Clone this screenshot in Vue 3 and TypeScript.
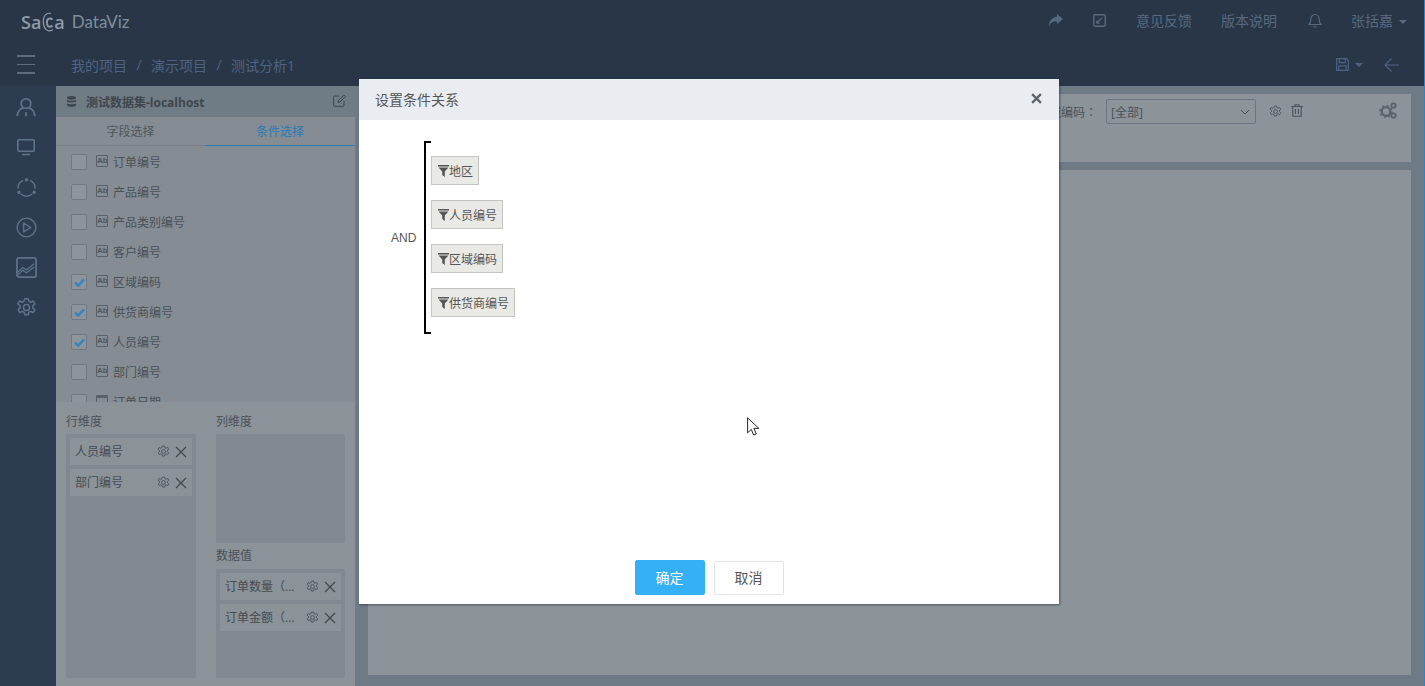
<script setup lang="ts">
// Analysis editor behind the "set condition relation" dialog. Colours are the
// already dimmed values, the page sits under the modal mask.
interface Field { name: string; checked: boolean; kind?: string }

const fields: Field[] = [
  { name: '订单编号', checked: false },
  { name: '产品编号', checked: false },
  { name: '产品类别编号', checked: false },
  { name: '客户编号', checked: false },
  { name: '区域编码', checked: true },
  { name: '供货商编号', checked: true },
  { name: '人员编号', checked: true },
  { name: '部门编号', checked: false },
  { name: '订单日期', checked: false, kind: 'date' },
]
const rows = ['人员编号', '部门编号']
const values = ['订单数量（...', '订单金额（...']
const conditions = ['地区', '人员编号', '区域编码', '供货商编号']
</script>

<template>
  <div class="app">
    <svg class="defs" width="0" height="0" aria-hidden="true">
      <symbol id="gear" viewBox="0 0 24 24">
        <path fill="none" stroke="currentColor" stroke-width="1.700" stroke-linejoin="round" d="M10 2h4l.7 3 2.200 1 2.700-1.500 2 3.400-2.300 2.100v2.400l2.300 2.100-2 3.400-2.700-1.500-2.200 1-.7 3h-4l-.7-3-2.200-1-2.700 1.500-2-3.400 2.300-2.100v-2.400L2.100 7.900l2-3.400L6.800 6 9 5z" />
        <circle cx="12" cy="12" r="3.500" fill="none" stroke="currentColor" stroke-width="1.700" />
      </symbol>
      <symbol id="cross" viewBox="0 0 12 12">
        <path d="M1 1l10 10M11 1L1 11" fill="none" stroke="currentColor" stroke-width="1.200" />
      </symbol>
      <symbol id="funnel" viewBox="0 0 11 12">
        <path d="M0 0h11v1.500H0zM.6 2.400h9.800L6.800 6.600V12L4.200 10V6.600z" fill="currentColor" />
      </symbol>
    </svg>

    <header class="topbar">
      <div class="logo">
        <span class="logo-saca">Sa</span>
        <svg class="logo-mark" viewBox="0 0 14 20" width="14" height="20">
          <path d="M10 1.500C6 .5 3 3 2.500 7c-.5 4 0 8 2.500 10.500 2 1.500 5 1.500 7 0" fill="none" stroke="currentColor" stroke-width="1.200" />
          <path d="M11.500 7.500C10 6 7.500 6 6.500 7.500c-1 2-1 4 0 6 1 1.500 3.500 1.500 5 0" fill="none" stroke="currentColor" stroke-width="2" />
        </svg>
        <span class="logo-saca">a</span>
        <span class="logo-name">DataViz</span>
      </div>
      <nav class="top-actions">
        <svg class="share" viewBox="0 0 16 14" width="15" height="13">
          <path d="M9.500 0L16 5.500 9.500 11V7.800C5.500 7.800 2.800 9 1 13 1 7.500 4 3.500 9.500 3.200z" fill="currentColor" />
        </svg>
        <svg class="task" viewBox="0 0 14 14" width="13" height="13">
          <rect x=".8" y=".8" width="12.400" height="12.400" rx="1.500" fill="none" stroke="currentColor" stroke-width="1.500" />
          <path d="M4 9.800L9.500 4.300M4.200 7v2.800H7" fill="none" stroke="currentColor" stroke-width="1.300" />
        </svg>
        <a class="top-link">意见反馈</a>
        <a class="top-link">版本说明</a>
        <svg class="bell" viewBox="0 0 14 15" width="14" height="15">
          <path d="M1 11.500c1.500-1.500 1.800-2.500 1.800-5C2.800 3.500 4.700 1.500 7 1.500s4.200 2 4.200 5c0 2.500.3 3.500 1.800 5zM5.500 13.300c.5 1 2.500 1 3 0" fill="none" stroke="currentColor" stroke-width="1.100" />
        </svg>
        <a class="top-user"><span>张括嘉</span><i class="caret" /></a>
      </nav>
    </header>

    <div class="crumbbar">
      <div class="burger"><i /><i /><i /></div>
      <div class="crumbs">
        <span>我的项目</span><b>/</b><span>演示项目</span><b>/</b><span>测试分析1</span>
      </div>
      <div class="crumb-tools">
        <svg viewBox="0 0 14 14" width="13" height="13">
          <path d="M.7.7h10.600l2 2v10.600H.7zM3.500 1v4h6.500V1M3 13V8.500h8V13" fill="none" stroke="currentColor" stroke-width="1.200" />
        </svg>
        <i class="caret" />
        <svg class="back" viewBox="0 0 15 14" width="15" height="14">
          <path d="M15 7H1M7.500.5L1 7l6.500 6.500" fill="none" stroke="currentColor" stroke-width="1.100" />
        </svg>
      </div>
    </div>

    <div class="main">
      <aside class="rail">
        <svg viewBox="0 0 24 24" width="22" height="22">
          <circle cx="12" cy="7.500" r="5.500" fill="none" stroke="currentColor" stroke-width="2" />
          <path d="M2 22c0-5.500 3.500-9 7-9.500M22 22c0-5.500-3.500-9-7-9.500M12 17v5" fill="none" stroke="currentColor" stroke-width="2" />
        </svg>
        <svg viewBox="0 0 18 17" width="18" height="17">
          <rect x=".8" y=".8" width="16.400" height="11.400" rx="1" fill="none" stroke="currentColor" stroke-width="1.600" />
          <path d="M5 15.500h8" stroke="currentColor" stroke-width="1.600" />
        </svg>
        <svg viewBox="0 0 22 22" width="21" height="21">
          <path d="M7.500 3.500A9 9 0 0 0 2 12M14.500 3.500A9 9 0 0 1 20 12M5 17.800a9 9 0 0 0 12 0" fill="none" stroke="currentColor" stroke-width="1.500" />
          <circle cx="11" cy="2.800" r="1.800" fill="currentColor" />
          <circle cx="3" cy="16" r="1.800" fill="currentColor" />
          <circle cx="19" cy="16" r="1.800" fill="currentColor" />
        </svg>
        <svg viewBox="0 0 22 22" width="21" height="21">
          <circle cx="11" cy="11" r="9.800" fill="none" stroke="currentColor" stroke-width="1.500" />
          <path d="M8 6.500L15.500 11 8 15.500z" fill="none" stroke="currentColor" stroke-width="1.500" stroke-linejoin="round" />
        </svg>
        <svg viewBox="0 0 22 22" width="21" height="21">
          <rect x="1" y="1" width="20" height="20" rx="2" fill="none" stroke="currentColor" stroke-width="1.800" />
          <path d="M2 16l5-5 4 2.500L19 7M2 19l5-5 4 2.500 8-6" fill="none" stroke="currentColor" stroke-width="1.300" />
        </svg>
        <svg viewBox="0 0 24 24" width="21" height="21"><use href="#gear" /></svg>
      </aside>

      <section class="panel">
        <div class="panel-title">
          <svg viewBox="0 0 12 12" width="11" height="11">
            <ellipse cx="6" cy="2" rx="5" ry="2" fill="currentColor" />
            <path d="M1 4c1.500 1.500 8.500 1.500 10 0v2c-1.500 1.500-8.500 1.500-10 0zM1 8c1.500 1.500 8.500 1.500 10 0v2c-1.500 2.500-8.500 2.500-10 0z" fill="currentColor" />
          </svg>
          <span>测试数据集-localhost</span>
          <svg class="edit" viewBox="0 0 13 13" width="13" height="13">
            <path d="M11 7v4.200c0 .7-.5 1.200-1.200 1.200H1.800c-.7 0-1.200-.5-1.200-1.200V3.200C.6 2.500 1.100 2 1.800 2H6M5 8.500l.5-2L11 1l1.500 1.500L7 8z" fill="none" stroke="currentColor" stroke-width="1" />
          </svg>
        </div>
        <div class="tabs">
          <span>字段选择</span>
          <span class="on">条件选择</span>
        </div>
        <ul class="fields">
          <li v-for="f in fields" :key="f.name">
            <i class="check">
              <svg v-if="f.checked" viewBox="0 0 12 10" width="11" height="9">
                <path d="M1 5l3.500 3.500L11 1.500" fill="none" stroke="#2f86c0" stroke-width="2.600" />
              </svg>
            </i>
            <i class="type" :class="{ date: f.kind === 'date' }">{{ f.kind === 'date' ? '' : 'Ab' }}</i>
            <span>{{ f.name }}</span>
          </li>
        </ul>
        <div class="dims">
          <div class="dim-col">
            <label>行维度</label>
            <div class="dim-box tall">
              <div v-for="r in rows" :key="r" class="dim-item">
                <span>{{ r }}</span>
                <svg class="g" width="13" height="13"><use href="#gear" /></svg>
                <svg class="x" width="12" height="12"><use href="#cross" /></svg>
              </div>
            </div>
          </div>
          <div class="dim-col">
            <label>列维度</label>
            <div class="dim-box short" />
            <label class="second">数据值</label>
            <div class="dim-box value">
              <div v-for="v in values" :key="v" class="dim-item">
                <span>{{ v }}</span>
                <svg class="g" width="13" height="13"><use href="#gear" /></svg>
                <svg class="x" width="12" height="12"><use href="#cross" /></svg>
              </div>
            </div>
          </div>
        </div>
      </section>

      <section class="work">
        <div class="filter-card">
          <span class="filter-label">区域编码：</span>
          <div class="select">
            <span>[全部]</span>
            <svg viewBox="0 0 10 6" width="10" height="6"><path d="M1 1l4 4 4-4" fill="none" stroke="currentColor" /></svg>
          </div>
          <svg class="f-gear" width="13" height="13"><use href="#gear" /></svg>
          <svg class="f-trash" viewBox="0 0 12 13" width="12" height="13">
            <path d="M0 2.500h12M4 2.500V.7h4v1.800M1.800 2.500v9.800h8.400V2.500M4.500 5v5M7.500 5v5" fill="none" stroke="currentColor" stroke-width="1.100" />
          </svg>
          <div class="f-gears">
            <svg viewBox="0 0 18 17" width="18" height="17">
              <circle cx="7" cy="9.500" r="4.300" fill="none" stroke="currentColor" stroke-width="2.200" />
              <circle cx="7" cy="9.500" r="6" fill="none" stroke="currentColor" stroke-width="1.500" stroke-dasharray="2 2.700" />
              <circle cx="14.500" cy="3.500" r="2.200" fill="none" stroke="currentColor" stroke-width="1.800" />
              <circle cx="14.500" cy="13.500" r="2.200" fill="none" stroke="currentColor" stroke-width="1.800" />
            </svg>
          </div>
        </div>
        <div class="canvas" />
      </section>
    </div>

    <div class="dialog">
      <div class="dialog-head">
        <span>设置条件关系</span>
        <svg viewBox="0 0 10 10" width="11" height="11">
          <path d="M1 1l8 8M9 1L1 9" fill="none" stroke="#59636b" stroke-width="2" />
        </svg>
      </div>
      <div class="dialog-body">
        <div class="relation">
          <span class="op">AND</span>
          <div class="bracket">
            <div v-for="c in conditions" :key="c" class="chip">
              <svg width="11" height="12"><use href="#funnel" /></svg>
              <span>{{ c }}</span>
            </div>
          </div>
        </div>
      </div>
      <div class="dialog-foot">
        <button class="btn primary">确定</button>
        <button class="btn">取消</button>
      </div>
    </div>

    <svg class="pointer" viewBox="0 0 13 19" width="13" height="19">
      <path d="M.6.8v15l3.700-3.400 2.300 5.600 2.700-1.100-2.400-5.500h5z" fill="#fff" stroke="#22252a" stroke-width="1" />
    </svg>
  </div>
</template>

<style scoped>
.app {
  position: relative;
  width: 100%;
  height: 686px;
  overflow: hidden;
  display: flex;
  flex-direction: column;
  background: #283648;
  border-right: 1px solid #2a85c8;
  box-sizing: border-box;
  font: 12px "Open Sans", "Noto Sans CJK SC", sans-serif;
  color: #4a5158;
}
.defs { position: absolute; }
i { font-style: normal; display: block; }

.topbar {
  flex: 0 0 43px;
  height: 43px;
  display: flex;
  align-items: center;
  padding: 0 17px 0 21px;
  color: #566a80;
}
.logo { display: flex; align-items: center; color: #8e9ba6; }
.logo-saca { font: 600 18px "Open Sans", sans-serif; }
.logo-mark { margin: 0 -1px 0 0; }
.logo-name { font: 400 17px Lato, sans-serif; margin-left: 7px; color: #7f8d99; }
.top-actions { margin-left: auto; display: flex; align-items: center; }
.share { margin-right: 30px; margin-top: -2px; }
.task { margin-right: 30px; margin-top: -3px; }
.top-link { font-size: 14px; margin-right: 29px; margin-top: -4px; }
.bell { margin-left: 2px; margin-right: 29px; margin-top: -2px; }
.top-user { font-size: 14px; display: flex; align-items: center; }
.top-user span { margin-top: -3px; }
.caret {
  width: 0;
  height: 0;
  border: 4px solid transparent;
  border-top-color: currentColor;
  border-bottom: 0;
  margin-left: 6px;
}

.crumbbar {
  flex: 0 0 43px;
  height: 43px;
  display: flex;
  align-items: center;
  padding-right: 25px;
  color: #4e6384;
}
.burger { width: 18px; margin: 0 21px 0 17px; display: flex; flex-direction: column; gap: 7px; }
.burger i { height: 1.500px; background: #5b6d80; }
.crumbs { margin-left: 15px; font-size: 14px; display: flex; gap: 9px; }
.crumbs b { font-weight: 400; width: 6px; text-align: center; }
.crumb-tools { margin-left: auto; display: flex; align-items: center; }
.back { margin-left: 21px; }

.main { flex: 1; min-height: 0; display: flex; }

.rail {
  flex: 0 0 56px;
  box-sizing: border-box;
  padding-right: 4px;
  background: #2d3c50;
  color: #5f7388;
  display: flex;
  flex-direction: column;
  align-items: center;
}
.rail svg { height: 21px; margin-top: 19px; }
.rail svg:first-child { margin-top: 11px; }

.panel {
  flex: 0 0 299px;
  min-height: 0;
  display: flex;
  flex-direction: column;
  background: #858c93;
}
.panel-title {
  flex: 0 0 31px;
  height: 31px;
  display: flex;
  align-items: center;
  padding: 0 10px;
  background: #707c85;
  color: #3f464d;
  font-weight: 700;
}
.panel-title span { margin-left: 9px; }
.edit { margin-left: auto; margin-right: -1px; margin-top: -2px; }
.tabs {
  flex: 0 0 29px;
  height: 29px;
  display: grid;
  grid-template-columns: 149px 150px;
  text-align: center;
  line-height: 29px;
  color: #4f565d;
}
.tabs span { height: 29px; box-sizing: border-box; border-bottom: 1px solid #727c8b; }
.tabs .on { color: #2b7ab5; border-bottom-color: #2b7ab5; }
.fields {
  flex: 0 0 256px;
  height: 256px;
  margin: 0;
  padding: 1px 0 0 15px;
  list-style: none;
  overflow: hidden;
  box-sizing: border-box;
}
.fields li { height: 30px; display: flex; align-items: center; }
.check {
  width: 16px;
  height: 16px;
  box-sizing: border-box;
  border: 1px solid #6f7983;
  border-radius: 2px;
  background: #8d949b;
  display: flex;
  align-items: center;
  justify-content: center;
}
.type {
  width: 12px;
  height: 12px;
  box-sizing: border-box;
  margin: -2px 5px 0 9px;
  border: 1px solid #59606a;
  border-radius: 1px;
  font: 700 8px/10px "Liberation Sans", sans-serif;
  text-align: center;
  color: #4f565d;
}
.type.date { border-top: 3px dashed #59606a; }
.dims {
  flex: 1;
  min-height: 0;
  display: grid;
  grid-template-columns: 130px 129px;
  column-gap: 20px;
  padding-left: 10px;
  background: #8b9298;
}
.dim-col { display: flex; flex-direction: column; }
label { display: block; box-sizing: border-box; height: 32px; padding-top: 11px; line-height: 18px; color: #4a5158; }
.second { height: 26px; padding-top: 4px; line-height: 18px; }
.dim-box { background: #81888f; border-radius: 2px; padding: 4px; box-sizing: border-box; display: flex; flex-direction: column; gap: 4px; }
.tall { height: 244px; }
.short { height: 109px; }
.value { height: 109px; }
.dim-item {
  height: 27px;
  flex: none;
  display: flex;
  align-items: center;
  padding: 0 5px;
  background: #8b9298;
  color: #454c53;
}
.dim-item span { flex: 1; white-space: nowrap; overflow: hidden; margin-top: -2px; }
.g { margin-right: 5px; color: #4a5158; }
.x { color: #41474d; }

.work {
  flex: 1;
  min-width: 0;
  display: flex;
  flex-direction: column;
  gap: 8px;
  padding: 8px 13px 11px;
  background: #6e7a86;
}
.filter-card {
  flex: 0 0 68px;
  background: #8c9399;
  display: flex;
  align-items: flex-start;
  justify-content: flex-end;
  padding: 5px 14px 0 0;
  box-sizing: border-box;
}
.filter-label { line-height: 25px; margin-right: 9px; font-family: "Noto Sans CJK TC", sans-serif; }
.select {
  width: 150px;
  height: 25px;
  box-sizing: border-box;
  border: 1px solid #6c7682;
  border-radius: 2px;
  display: flex;
  align-items: center;
  justify-content: space-between;
  padding: 0 5px 0 4px;
  color: #4a5158;
}
.f-gear { margin: 6px 0 0 13px; }
.f-trash { margin: 5px 0 0 9px; }
.f-gears { margin: 3px 0 0 76px; color: #59626a; }
.canvas { flex: 1; background: #8c9399; }

.dialog {
  position: absolute;
  left: 359px;
  top: 79px;
  width: 700px;
  height: 525px;
  background: #fff;
  display: flex;
  flex-direction: column;
  box-shadow: 1px 1px 2px rgba(40, 50, 60, .6);
}
.dialog-head {
  flex: 0 0 41px;
  box-sizing: border-box;
  display: flex;
  align-items: center;
  justify-content: space-between;
  padding: 0 17px 2px 16px;
  background: #e9ecf0;
  font-size: 14px;
  color: #555;
}
.dialog-body { flex: 1; padding: 21px 0 0 32px; }
.relation { display: flex; align-items: center; color: #555; }
.op { margin-right: 6px; font: 12px "Liberation Sans", sans-serif; width: 27px; }
.bracket {
  position: relative;
  display: flex;
  flex-direction: column;
  align-items: flex-start;
  gap: 15px;
  height: 193px;
  box-sizing: border-box;
  padding: 15px 0 0 5px;
  border-left: 2px solid #000;
}
.bracket::before,
.bracket::after {
  content: "";
  position: absolute;
  left: 0;
  width: 5px;
  height: 2px;
  background: #000;
}
.bracket::before { top: 0; }
.bracket::after { bottom: 0; }
.chip {
  height: 29px;
  box-sizing: border-box;
  display: flex;
  align-items: center;
  padding: 0 5px 0 6px;
  background: #e9e9e5;
  border: 1px solid #c4c4c2;
  color: #555;
}
.chip svg { color: #555; margin-right: 0; }
.dialog-foot { flex: 0 0 44px; display: flex; justify-content: center; gap: 9px; align-items: flex-start; }
.btn {
  width: 70px;
  height: 34px;
  margin-top: 1px;
  padding: 0 0 2px;
  background: #fff;
  border: 1px solid #dfe3e7;
  border-bottom-color: #e3e3df;
  border-radius: 2px;
  font: 14px "Noto Sans CJK SC", sans-serif;
  color: #555;
}
.btn.primary { height: 35px; margin-top: 0; background: #35b0f6; border-color: #35b0f6; color: #fff; }

.pointer { position: absolute; left: 747px; top: 417px; }
</style>

<style>
html, body { margin: 0; background: #283648; }
</style>
